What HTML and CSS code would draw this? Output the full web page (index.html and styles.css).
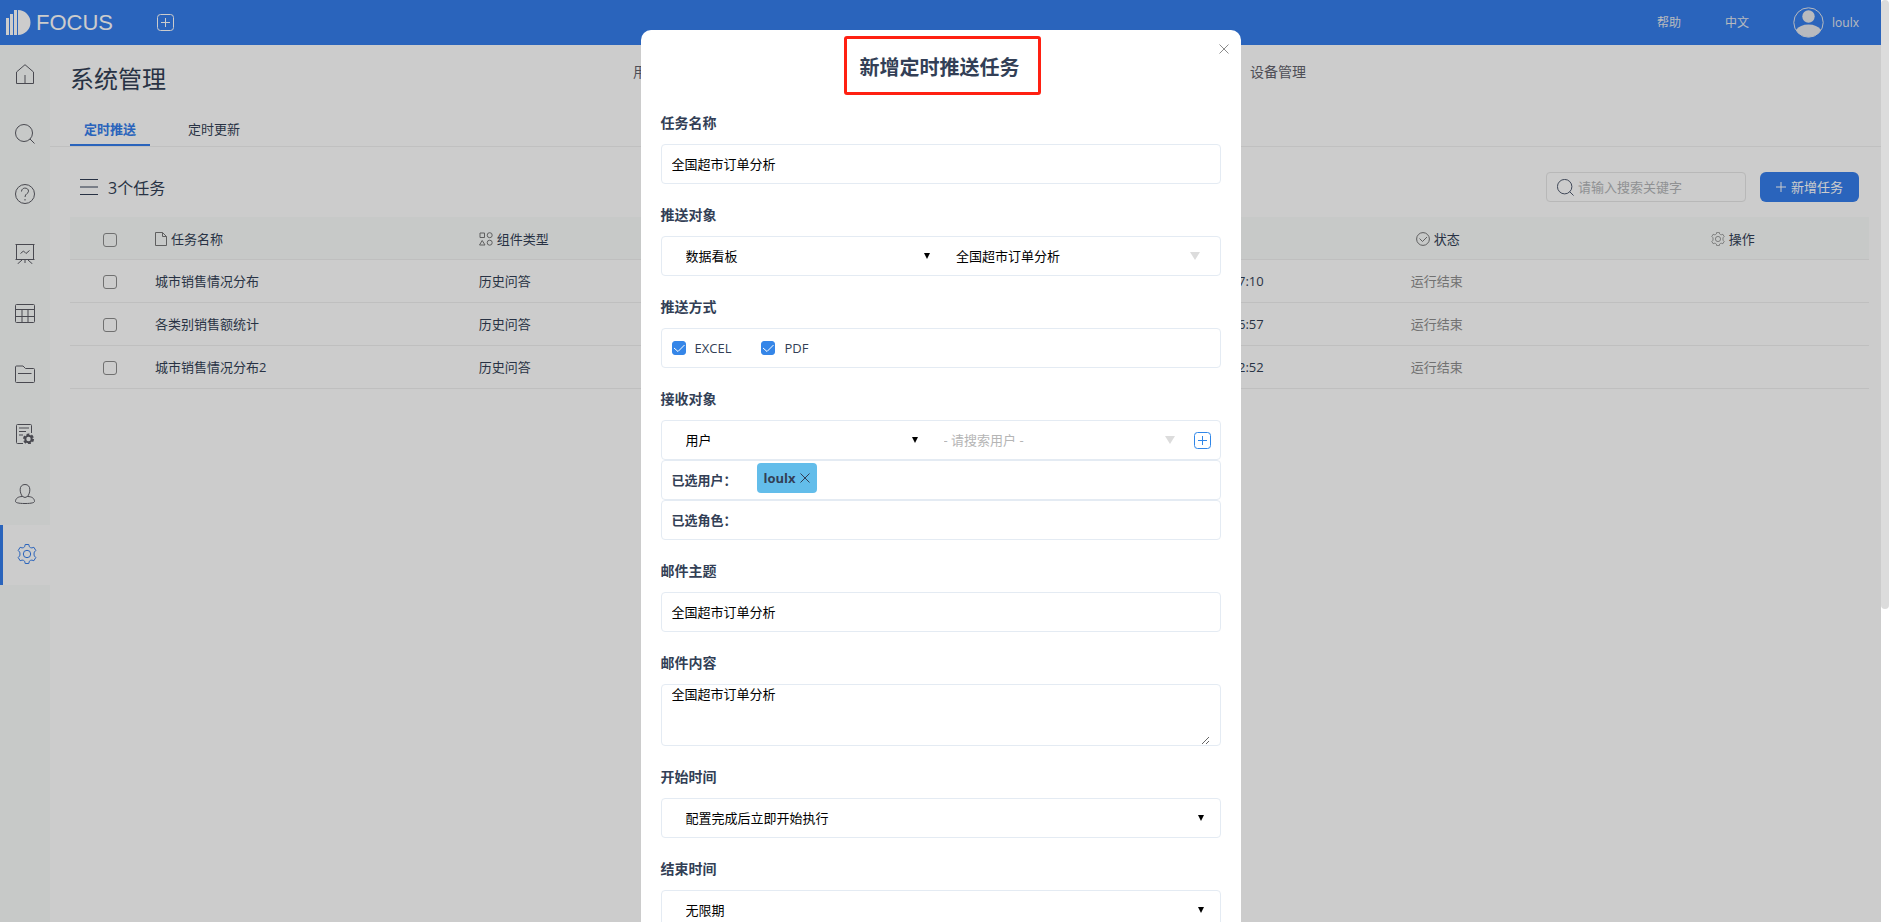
FILE: index.html
```html
<!DOCTYPE html>
<html lang="zh-CN">
<head>
<meta charset="utf-8">
<title>系统管理 - FOCUS</title>
<link rel="stylesheet" href="styles.css">
</head>
<body>
<svg class="symbols" aria-hidden="true">
  <symbol id="search" viewBox="0 0 20 20"><circle cx="9" cy="9" r="8.5"/><path d="M15 15l4.500 4.500"/></symbol>
  <symbol id="gear" viewBox="0 0 20 20"><circle cx="10" cy="10" r="3.700"/><path d="M8.200.5h3.600l.5 2.200q1 1.200 2.600 1.200l2-.6 1.900 3.200-1.500 1.600q-.6 1.900 0 3.800l1.500 1.600-1.900 3.200-2-.6q-1.600 0-2.600 1.200l-.5 2.200H8.200l-.5-2.200q-1-1.200-2.600-1.200l-2 .6-1.900-3.200 1.500-1.600q.6-1.900 0-3.800L1.200 6.500l1.900-3.200 2 .6q1.600 0 2.600-1.200z"/></symbol>
  <symbol id="plusbox" viewBox="0 0 17 17"><rect x=".5" y=".5" width="16" height="16" rx="3"/><path d="M8.500 4v9M4 8.500h9"/></symbol>
  <symbol id="cross" viewBox="0 0 10 10"><path d="M.5.5l9 9M9.500.5l-9 9"/></symbol>
  <symbol id="caret" viewBox="0 0 10 8" preserveAspectRatio="none"><path d="M0 0h10L5 8z"/></symbol>
</svg>
<div class="screen">
  <header class="topbar">
    <a class="brand" href="#">
      <svg class="brand-mark" viewBox="0 0 25 25"><path d="M0 8h3v17H0zM4 4h3v21H4zM8 0h3v25H8zM12 0a12.500 12.500 0 0 1 0 25z"/></svg>
      <span>FOCUS</span>
    </a>
    <button class="icon-button topbar-add" aria-label="新建"><svg class="line" width="17" height="17"><use href="#plusbox"/></svg></button>
    <nav class="topbar-links">
      <a href="#">帮助</a>
      <a href="#">中文</a>
      <a class="account" href="#">
        <svg width="31" height="31" viewBox="0 0 31 31"><circle class="ring" cx="15.500" cy="15.500" r="14.700"/><circle cx="15.500" cy="9.500" r="6.200"/><path d="M3 23Q7 17.500 15.500 17.500T28 23Q24 30 15.500 30T3 23z"/></svg>
        <span>loulx</span>
      </a>
    </nav>
  </header>
  <div class="body">
    <nav class="sidebar">
      <a href="#" aria-label="首页"><svg class="line" width="20" height="20" viewBox="0 0 20 20"><path d="M1.500 19.500V8L10 .7 18.500 8v11.500zM10 19.500V11"/></svg></a>
      <a href="#" aria-label="搜索"><svg class="line" width="20" height="20"><use href="#search"/></svg></a>
      <a href="#" aria-label="问答"><svg class="line" width="20" height="20" viewBox="0 0 20 20"><circle cx="10" cy="10" r="9.500"/><path d="M6.500 7.500C6.500 3 13.500 3 13.500 7.200 13.500 9.800 10 9.500 10 13M10 15v1.500"/></svg></a>
      <a href="#" aria-label="看板"><svg class="line" width="20" height="20" viewBox="0 0 20 20"><path d="M.5.5h19M1.500.5v15M18.500.5v15M.5 15.500h19M5.500 9.500l3-2.500 2.500 2.500 3.500-3M7 16l-4.500 4M13 16l4.500 4M10 16v3"/></svg></a>
      <a href="#" aria-label="数据表"><svg class="line" width="20" height="20" viewBox="0 0 20 20"><rect x=".5" y=".5" width="19" height="18" rx="1"/><path d="M.5 5.500h19M.5 12.500h19M7 5.500v13M13 5.500v13"/></svg></a>
      <a href="#" aria-label="资源"><svg class="line" width="20" height="20" viewBox="0 0 20 20"><path d="M.5 17.500V3q0-1 1-1h6.500l2.500 2.500h8q1 0 1 1v12q0 1-1 1h-17q-1 0-1-1zM3 9.500h13.500"/></svg></a>
      <a href="#" aria-label="数据管理"><svg class="line" width="20" height="20" viewBox="0 0 20 20"><path d="M8 19.500H2.500q-1 0-1-1v-17q0-1 1-1h13q1 0 1 1V9M4 4h10M4 7.500h7M4 11h4"/><circle class="bold" cx="13.500" cy="15" r="3.200"/><path class="bold" stroke-dasharray="2.700 2" d="M18 15a4.500 4.500 0 1 1-9 0a4.500 4.500 0 1 1 9 0"/></svg></a>
      <a href="#" aria-label="用户"><svg class="line" width="20" height="20" viewBox="0 0 20 20"><path d="M10 .5C3.500.5 4.500 9 7.500 12.500 3 12.500.5 14.500.5 17.500c0 1 2.500 2 9.500 2s9.500-1 9.500-2c0-3-2.500-5-7-5C15.500 9 16.500.5 10 .5zM7.500 12.500q2.500 2 5 0"/></svg></a>
      <a class="active" href="#" aria-label="系统管理"><svg class="line" width="20" height="20"><use href="#gear"/></svg></a>
    </nav>
    <main class="content">
      <div class="page-head">
        <h1>系统管理</h1>
        <nav class="sections"><a href="#">用户管理</a><a href="#">设备管理</a></nav>
      </div>
      <div class="tabs">
        <button class="tab selected">定时推送</button>
        <button class="tab">定时更新</button>
      </div>
      <div class="toolbar">
        <svg class="line list-icon" width="18" height="16" viewBox="0 0 18 16"><path d="M0 .5h18M0 8h18M0 15.500h18"/></svg>
        <span class="count">3个任务</span>
        <label class="search"><svg class="line" width="17" height="17"><use href="#search"/></svg><input type="text" placeholder="请输入搜索关键字" aria-label="搜索"></label>
        <button class="primary"><svg class="line" width="10" height="10" viewBox="0 0 10 10"><path d="M5 0v10M0 5h10"/></svg>新增任务</button>
      </div>
      <table class="tasks">
        <colgroup><col class="c-check"><col class="c-name"><col class="c-type"><col class="c-time"><col class="c-status"><col></colgroup>
        <thead>
          <tr>
            <th><input type="checkbox" aria-label="全选"></th>
            <th><span class="th"><svg class="line" width="12" height="14" viewBox="0 0 12 14"><path d="M.5.5h7l4 4v9H.5zM7.500.5v4h4"/></svg>任务名称</span></th>
            <th><span class="th"><svg class="line" width="14" height="14" viewBox="0 0 14 14"><path d="M1 1h4.500v4.500H1zM3.200 8.500L6 13H.5z"/><circle cx="10.700" cy="3.200" r="2.500"/><circle cx="10.700" cy="10.700" r="2.500"/></svg>组件类型</span></th>
            <th></th>
            <th><span class="th inset"><svg class="line" width="14" height="14" viewBox="0 0 14 14"><circle cx="7" cy="7" r="6.400"/><path d="M3.500 6.500l3 3L11 5"/></svg>状态</span></th>
            <th><span class="th inset"><svg class="line" width="14" height="14"><use href="#gear"/></svg>操作</span></th>
          </tr>
        </thead>
        <tbody>
          <tr><td><input type="checkbox" aria-label="选择"></td><td>城市销售情况分布</td><td>历史问答</td><td class="time">7:10</td><td class="done">运行结束</td><td></td></tr>
          <tr><td><input type="checkbox" aria-label="选择"></td><td>各类别销售额统计</td><td>历史问答</td><td class="time">6:57</td><td class="done">运行结束</td><td></td></tr>
          <tr><td><input type="checkbox" aria-label="选择"></td><td>城市销售情况分布2</td><td>历史问答</td><td class="time">2:52</td><td class="done">运行结束</td><td></td></tr>
        </tbody>
      </table>
    </main>
  </div>

  <div class="overlay">
    <form class="dialog" role="dialog" aria-labelledby="dialog-title">
      <button type="button" class="icon-button close" aria-label="关闭"><svg class="line" width="10" height="10"><use href="#cross"/></svg></button>
      <h2 id="dialog-title">新增定时推送任务</h2>

      <label class="caption" for="name">任务名称</label>
      <div class="box"><input id="name" type="text" value="全国超市订单分析"></div>

      <label class="caption" for="target">推送对象</label>
      <div class="box split">
        <div class="picker paired"><select id="target"><option>数据看板</option></select><svg class="caret"><use href="#caret"/></svg></div>
        <div class="picker"><input type="text" value="全国超市订单分析" aria-label="看板"><svg class="caret muted"><use href="#caret"/></svg></div>
      </div>

      <span class="caption">推送方式</span>
      <div class="box checks">
        <label><input type="checkbox" checked>EXCEL</label>
        <label><input type="checkbox" checked>PDF</label>
      </div>

      <label class="caption" for="receiver">接收对象</label>
      <div class="box split">
        <div class="picker paired"><select id="receiver"><option>用户</option></select><svg class="caret"><use href="#caret"/></svg></div>
        <div class="picker"><input type="text" placeholder="- 请搜索用户 -" aria-label="搜索用户"><svg class="caret muted"><use href="#caret"/></svg></div>
        <button type="button" class="icon-button add" aria-label="添加"><svg class="line" width="17" height="17"><use href="#plusbox"/></svg></button>
      </div>
      <div class="box chosen"><span class="chosen-label">已选用户：</span><span class="chip">loulx<button type="button" class="icon-button" aria-label="移除"><svg class="line" width="10" height="10"><use href="#cross"/></svg></button></span></div>
      <div class="box chosen"><span class="chosen-label">已选角色：</span></div>

      <label class="caption" for="subject">邮件主题</label>
      <div class="box"><input id="subject" type="text" value="全国超市订单分析"></div>

      <label class="caption" for="message">邮件内容</label>
      <div class="box area"><textarea id="message">全国超市订单分析</textarea></div>

      <label class="caption" for="start">开始时间</label>
      <div class="box split"><div class="picker"><select id="start"><option>配置完成后立即开始执行</option></select><svg class="caret"><use href="#caret"/></svg></div></div>

      <label class="caption" for="end">结束时间</label>
      <div class="box split"><div class="picker"><select id="end"><option>无限期</option></select><svg class="caret"><use href="#caret"/></svg></div></div>
    </form>
  </div>
</div>
<div class="scroll-track"><div class="scroll-thumb"></div></div>
</body>
</html>
```

FILE: styles.css
```css
* { box-sizing: border-box; }
body {
  margin: 0;
  display: flex;
  height: 100vh;
  overflow: hidden;
  background: #fff;
  color: #333f56;
  font: 13px/20px "Open Sans", "Noto Sans CJK SC", sans-serif;
}
a { color: inherit; text-decoration: none; }
button, input, select, textarea { font: inherit; color: inherit; margin: 0; }
h1, h2 { margin: 0; }
svg { display: block; flex: none; }
.symbols { position: absolute; width: 0; height: 0; }
.line { fill: none; stroke: currentColor; stroke-width: 1; }
.line .bold { stroke-width: 2; }
.icon-button { padding: 0; border: 0; background: none; }

.screen { position: relative; flex: 1; min-width: 0; display: flex; flex-direction: column; }
.scroll-track { width: 8px; background: #fff; }
.scroll-thumb { width: 8px; height: 66%; border-radius: 4px; background: #dcdcdc; }

.topbar {
  display: flex;
  align-items: center;
  height: 45px;
  padding: 0 22px 0 6px;
  background: #357deb;
  color: #fff;
}
.brand { display: flex; align-items: center; gap: 5px; width: 151px; font: 22px/30px "Liberation Sans", sans-serif; }
.brand-mark { width: 25px; height: 25px; fill: #fff; }
.topbar-add { color: #fff; }
.topbar-links { display: flex; align-items: center; gap: 44px; margin-left: auto; font-size: 12px; color: #e6e9ee; }
.account { display: flex; align-items: center; gap: 8px; font-size: 12px; }
.account svg { fill: #e6e9ee; }
.account .ring { fill: none; stroke: #e6e9ee; }

.body { flex: 1; display: flex; min-height: 0; }
.sidebar { width: 50px; flex: none; background: #f9fcfb; color: #5c5c64; }
.sidebar a { display: flex; align-items: center; justify-content: center; height: 60px; padding-bottom: 2px; }
.sidebar .active { border-left: 3px solid #357deb; background: #fff; color: #357deb; }
.content { flex: 1; min-width: 0; }

.page-head { display: flex; align-items: flex-start; height: 66px; padding: 16px 0 0 20px; }
h1 { flex: 0 0 563px; font-size: 24px; line-height: 36px; font-weight: 400; }
.sections { display: flex; justify-content: space-between; width: 673px; font-size: 14px; line-height: 22px; color: #62626c; }
.tabs { display: flex; gap: 24px; height: 36px; padding-left: 20px; border-bottom: 1px solid #f0f0f0; }
.tab { width: 80px; padding: 2px 0 0; border: 0; border-bottom: 2px solid transparent; background: none; }
.tab.selected { border-color: #357deb; color: #357deb; font-weight: 700; }

.toolbar { display: flex; align-items: center; height: 70px; padding: 10px 22px 0 30px; }
.count { margin-left: 10px; padding-top: 2px; font-size: 16px; line-height: 24px; }
.search {
  display: flex; align-items: center; gap: 4px;
  width: 200px; height: 30px; margin-left: auto; padding: 0 10px;
  border: 1px solid #e6e6e6; border-radius: 4px;
}
.search input { flex: 1; min-width: 0; padding: 0; border: 0; background: none; }
.search input::placeholder { color: #b4b6b8; }
.primary {
  display: flex; align-items: center; justify-content: center; gap: 5px;
  width: 99px; height: 30px; margin-left: 14px; padding: 0;
  border: 0; border-radius: 6px; background: #357deb; color: #fff;
}

.tasks { width: calc(100% - 32px); margin-left: 20px; table-layout: fixed; border-collapse: separate; border-spacing: 0; }
.tasks th, .tasks td { height: 43px; padding: 0 0 1px; border-bottom: 1px solid #efefef; text-align: left; font-weight: 400; }
.tasks th { background: #f9fcfb; padding: 1px 0 0; }
.tasks .time { padding-right: 147px; text-align: right; }
.tasks .done { color: #8e8e8e; }
.c-check { width: 85px; }
.c-name, .c-type { width: 18%; }
.c-time { width: 33.8%; }
.c-status { width: 16.4%; }
.th { display: flex; align-items: center; gap: 4px; }
.th svg { color: #777; }
.inset { padding-left: 5px; }
input[type="checkbox"] {
  appearance: none; display: block; width: 14px; height: 14px;
  border: 1px solid #8c8c8c; border-radius: 3px; background: transparent;
}
.tasks input { margin: 3px 0 0 33px; }

.overlay {
  position: absolute; inset: 0;
  padding-top: 30px; overflow: hidden;
  background: rgba(0, 0, 0, .2);
}
.dialog {
  position: relative;
  width: 600px; min-height: 100%; margin: 0 auto; padding: 6px 20px 20px;
  border-radius: 10px; background: #fff;
}
.close { position: absolute; top: 14px; right: 12px; color: #8c8c8c; }
h2 {
  width: 197px; height: 59px; margin: 0 0 0 183px; padding: 2px 13px 0;
  border: 3px solid #ff2012; border-radius: 3px;
  font-size: 20px; line-height: 54px; font-weight: 700; white-space: nowrap;
}
.caption { display: block; margin: 20px 0 10px; font-size: 14px; line-height: 22px; font-weight: 700; }
h2 + .caption { margin-top: 17px; }
.box { display: flex; align-items: center; height: 40px; padding: 0 10px; border: 1px solid #e4ebf3; border-radius: 4px; }
.box input[type="text"] { flex: 1; min-width: 0; padding: 0; border: 0; outline: 0; background: none; color: #000; }
.box input[type="text"]::placeholder { color: #b5b5b5; }
.split { gap: 16px; padding: 0 9px 0 24px; }
.picker { flex: 1; display: flex; align-items: center; min-width: 0; }
.picker select { flex: 1; min-width: 0; appearance: none; padding: 0; border: 0; background: none; color: #000; }
.caret { width: 6px; height: 6px; margin-right: 7px; fill: #000; }
.paired .caret { margin-right: 10px; }
.caret.muted { width: 10px; height: 8px; margin-right: 11px; fill: #dcdcdc; }
.picker + .icon-button { margin-left: -8px; color: #2f86e8; }
.checks { gap: 30px; }
.checks label { display: flex; align-items: center; gap: 9px; }
.checks input:checked {
  border-color: #3586e8;
  background: #3586e8 url("data:image/svg+xml,%3Csvg xmlns='http://www.w3.org/2000/svg' viewBox='0 0 12 12'%3E%3Cpath d='M1 6l4 3.500L11.500 3' fill='none' stroke='white'/%3E%3C/svg%3E");
}
.chosen { align-items: flex-start; padding-top: 2px; }
.chosen-label { width: 85px; line-height: 34px; font-weight: 700; }
.chip {
  display: flex; align-items: center; gap: 4px;
  height: 30px; padding: 0 7px;
  border-radius: 4px; background: #63bdea; font-weight: 700;
}
.area { height: auto; }
textarea { display: block; width: 100%; height: 60px; padding: 0; border: 0; outline: 0; background: none; color: #000; line-height: 18px; resize: both; }
```
